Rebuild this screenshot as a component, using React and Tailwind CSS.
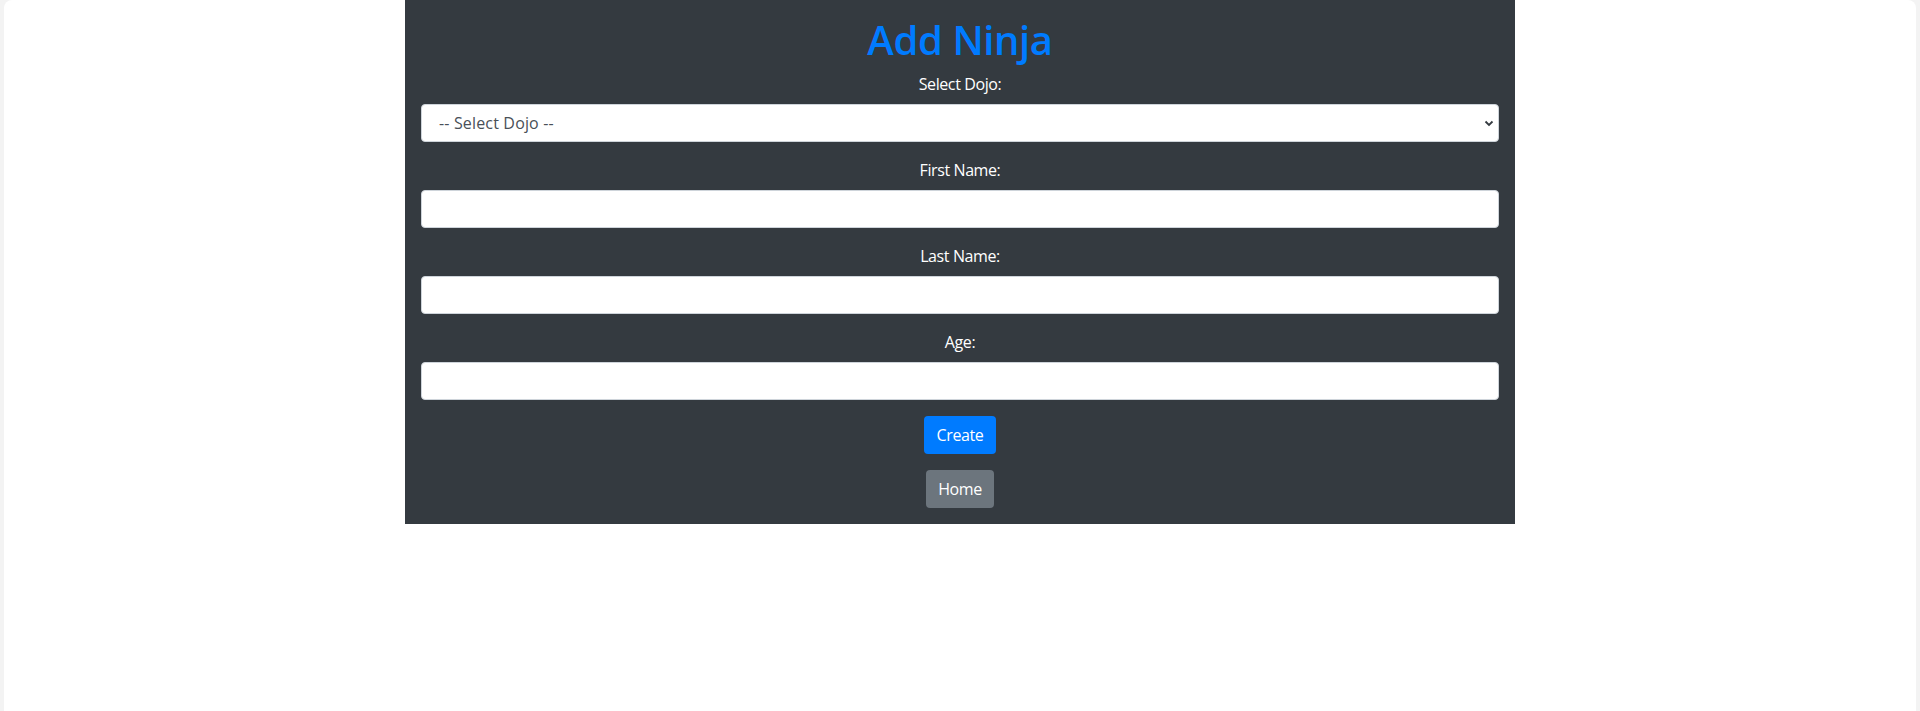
export default function App() {
  const label = "block text-white text-[16px] leading-6 mb-2";
  const input =
    "block w-full h-[38px] bg-white border border-[#ced4da] rounded-[4px] px-3 text-[16px] text-[#495057] outline-none";
  return (
    <div className="h-[711px] bg-[#f3f3f3] px-[4px] font-['Open_Sans',sans-serif] tracking-[-0.025em]">
      <div className="h-full bg-white rounded-t-[8px]">
        <div className="w-[1110px] mx-auto bg-[#343a40] text-center pt-4 pb-[16px] px-4">
          <h1 className="text-[40px] leading-[48px] font-semibold text-[#007bff] mb-2">Add Ninja</h1>
          <div className="mb-4">
            <label className={label}>Select Dojo:</label>
            <div className="relative">
              <select className={input + " appearance-none pl-[17px] text-left tracking-[0.01em]"} defaultValue="">
                <option value="">-- Select Dojo --</option>
              </select>
              <svg
                className="absolute right-[5px] top-1/2 -translate-y-1/2 pointer-events-none"
                width="10"
                height="8"
                viewBox="0 0 10 8"
              >
                <path d="M1.5 2.5 L5 6 L8.5 2.5" fill="none" stroke="#343a40" strokeWidth="1.8" />
              </svg>
            </div>
          </div>
          <div className="mb-4">
            <label className={label}>First Name:</label>
            <input type="text" className={input} />
          </div>
          <div className="mb-4">
            <label className={label}>Last Name:</label>
            <input type="text" className={input} />
          </div>
          <div className="mb-4">
            <label className={label}>Age:</label>
            <input type="text" className={input} />
          </div>
          <div className="flex justify-center">
            <button className="h-[38px] w-[72px] bg-[#007bff] text-white text-[16px] leading-6 rounded-[4px] tracking-[-0.025em]">
              Create
            </button>
          </div>
          <div className="flex justify-center mt-4">
            <button className="h-[38px] w-[68px] bg-[#6c757d] text-white text-[16px] leading-6 rounded-[4px] tracking-[-0.025em]">
              Home
            </button>
          </div>
        </div>
      </div>
    </div>
  );
}
